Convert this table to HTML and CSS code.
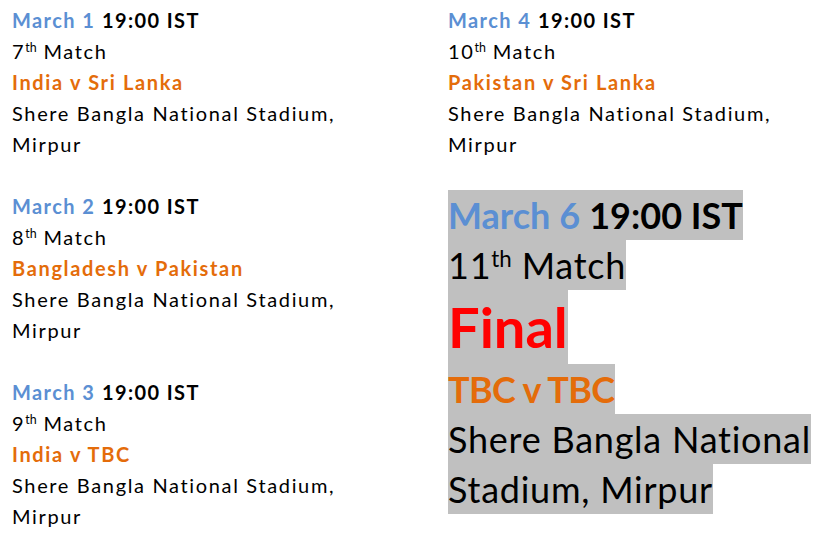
FILE: index.html
```html
<!DOCTYPE html>
<html>
<head>
<meta charset="utf-8">
<link rel="stylesheet" href="styles.css">
</head>
<body>
<div class="page">
  <div class="col">
    <div class="fixture">
      <div class="line"><b class="date">March 1</b> <b>19:00 IST</b></div>
      <div class="line">7<sup>th</sup> Match</div>
      <div class="line teams">India v Sri Lanka</div>
      <div class="line">Shere Bangla National Stadium,</div>
      <div class="line">Mirpur</div>
    </div>
    <div class="fixture">
      <div class="line"><b class="date">March 2</b> <b>19:00 IST</b></div>
      <div class="line">8<sup>th</sup> Match</div>
      <div class="line teams">Bangladesh v Pakistan</div>
      <div class="line">Shere Bangla National Stadium,</div>
      <div class="line">Mirpur</div>
    </div>
    <div class="fixture">
      <div class="line"><b class="date">March 3</b> <b>19:00 IST</b></div>
      <div class="line">9<sup>th</sup> Match</div>
      <div class="line teams">India v TBC</div>
      <div class="line">Shere Bangla National Stadium,</div>
      <div class="line">Mirpur</div>
    </div>
  </div>
  <div class="col">
    <div class="fixture">
      <div class="line"><b class="date">March 4</b> <b>19:00 IST</b></div>
      <div class="line">10<sup>th</sup> Match</div>
      <div class="line teams">Pakistan v Sri Lanka</div>
      <div class="line">Shere Bangla National Stadium,</div>
      <div class="line">Mirpur</div>
    </div>
    <div class="final">
      <div class="hl head"><b class="date">March 6</b> <b>19:00 IST</b></div>
      <div class="hl">11<sup>th</sup> Match</div>
      <div class="hl big"><b>Final</b></div>
      <div class="hl teams">TBC v TBC</div>
      <div class="hl">Shere Bangla National</div>
      <div class="hl">Stadium, Mirpur</div>
    </div>
  </div>
</div>
</body>
</html>
```
FILE: styles.css
```css
html, body {
  margin: 0;
  padding: 0;
  background: #ffffff;
}
body {
  font-family: Lato, "Open Sans", sans-serif;
  color: #000000;
}
.page {
  display: grid;
  grid-template-columns: 436px 1fr;
  padding: 5px 0 0 12px;
}
.fixture {
  font-size: 20px;
  line-height: 31px;
  margin-bottom: 31px;
  letter-spacing: 1.65px;
}
.fixture b {
  letter-spacing: 1.4px;
}
.line {
  white-space: nowrap;
}
.date {
  color: #5b8fd3;
}
b {
  font-weight: 700;
}
.teams {
  color: #e46c0a;
  font-weight: 700;
}
sup {
  font-size: 0.62em;
  line-height: 0;
  vertical-align: 0.55em;
  letter-spacing: 0;
}
.final {
  font-size: 36px;
  line-height: 50px;
  margin-top: -1px;
  letter-spacing: 0.75px;
}
.hl {
  width: fit-content;
  background: #c0c0c0;
  white-space: nowrap;
}
.hl.head {
  letter-spacing: 0;
}
.hl.teams {
  letter-spacing: -0.6px;
}
.big {
  font-size: 56px;
  line-height: 74px;
  color: #ff0000;
  letter-spacing: 0;
}
```
